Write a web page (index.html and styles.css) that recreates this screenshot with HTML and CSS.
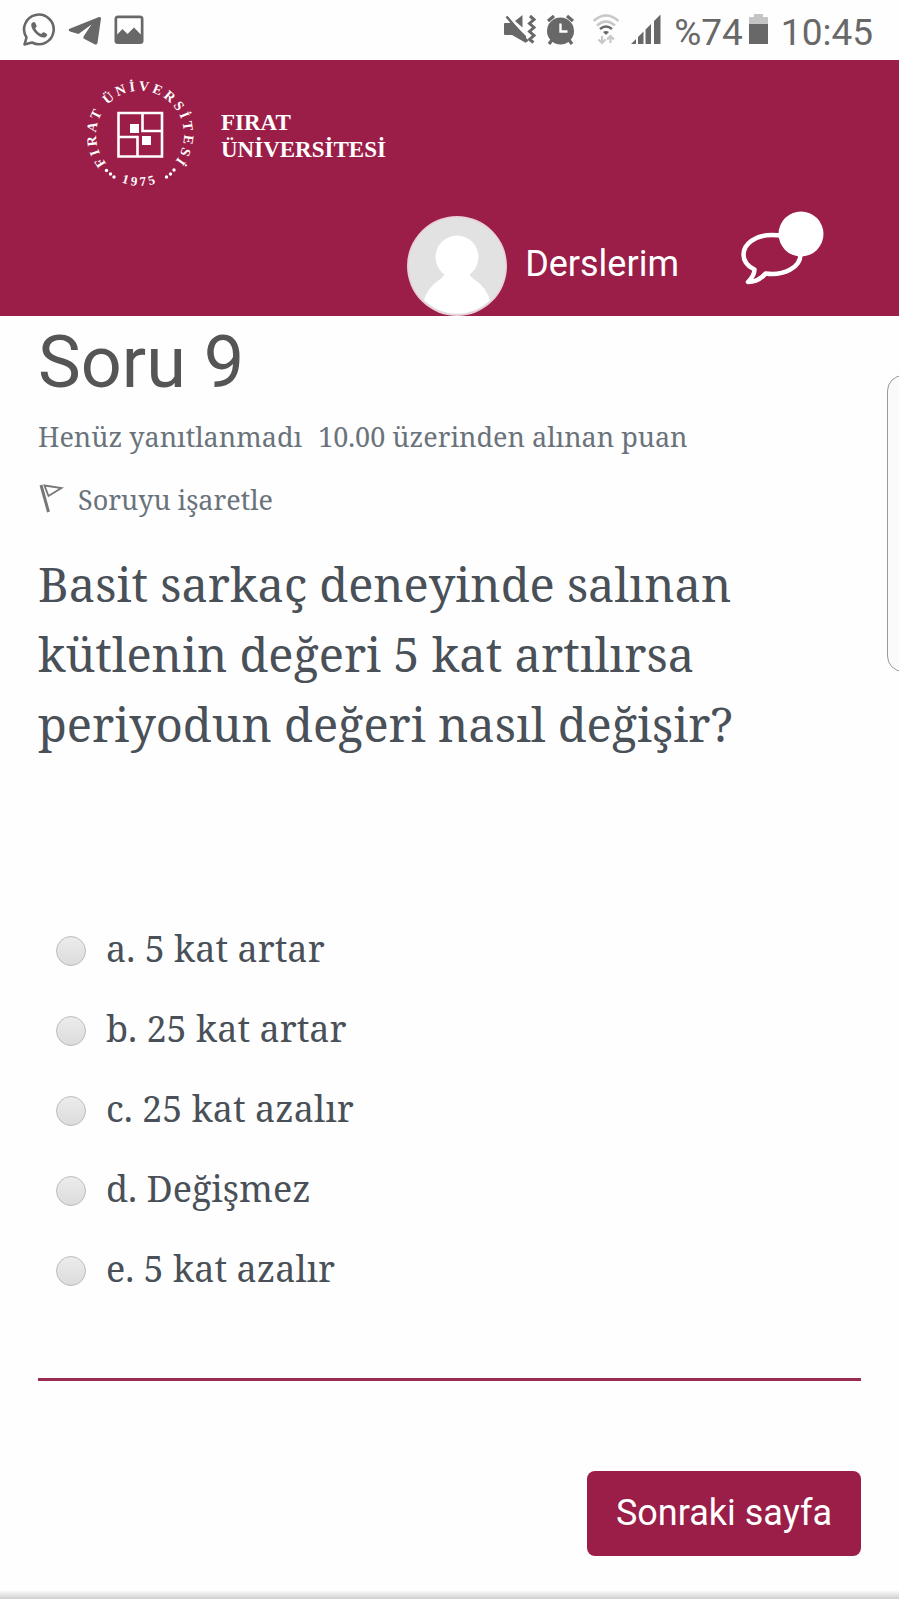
FILE: index.html
```html
<!DOCTYPE html>
<html lang="tr">
<head>
<meta charset="utf-8">
<meta name="viewport" content="width=device-width, initial-scale=1">
<title>Fırat Üniversitesi – Soru 9</title>
<link rel="stylesheet" href="styles.css">
</head>
<body>
<div class="status">
  <div class="status-left">
    <svg width="34" height="34" viewBox="0 0 34 34" fill="none" aria-hidden="true">
      <path d="M2.500 31.500 L4.500 24.500 A14.800 14.800 0 1 1 10 29.500 Z" stroke="#686868" stroke-width="2.600" stroke-linejoin="round"/>
      <path d="M10.500 9.500 C12 8.500 13 9 13.600 10.500 L14.600 12.800 C15 14 13.500 14.500 13.200 15.300 C14.500 18 16.500 19.800 19.200 21 C20 20.500 20.800 18.800 22 19.300 L24.600 20.700 C26 21.500 24.800 23.200 23.800 23.900 C19.500 26.500 12.500 20.500 10.300 15.800 C9 13 8.600 11 10.500 9.500 Z" fill="#686868"/>
    </svg>
    <svg width="34" height="34" viewBox="0 0 34 34" aria-hidden="true">
      <path d="M1 16 Q0 17.500 2 18.500 L10.500 21 L23.500 11.500 L15.500 23.500 V25.500 L27 31.500 Q29 32 29.500 30 L33 5.500 Q33 3.500 31 4 Z" fill="#686868"/>
    </svg>
    <svg width="30" height="30" viewBox="0 0 30 30" aria-hidden="true">
      <path d="M4 0.500 H26 Q29.500 0.500 29.500 4 V26 Q29.500 29 26 29 H4 Q0.500 29 0.500 26 V4 Q0.500 0.500 4 0.500 Z M3.200 3.200 V19.500 L8.500 14 L13.500 19 L20 12.500 L26.800 19.500 V3.200 Z" fill="#686868" fill-rule="evenodd"/>
    </svg>
  </div>
  <div class="status-right">
    <svg width="126" height="34" viewBox="0 0 126 34" fill="none" aria-hidden="true">
      <path d="M0 11 Q0 10 1 10 H9 L22 23 V30 L8 22 H1 Q0 22 0 21 Z M11 8 L18.500 2 V14.500 Z" fill="#686868"/>
      <path d="M2.500 3.500 L23.500 28.500" stroke="#686868" stroke-width="2.500"/>
      <path d="M26 3 L30 6.500 L25.500 10.500 L30 14.500 L25.500 18.500 L30 22.500 L25.500 26.500 L29.500 29.500" stroke="#686868" stroke-width="3"/>
      <circle cx="56.500" cy="18" r="13.500" fill="#686868"/>
      <path d="M44 8 L50 3 M63 3 L69 8 M48 27 L45 31 M65 27 L68 31" stroke="#686868" stroke-width="3.200"/>
      <path d="M56.500 10.500 V18.500 H63.500" stroke="#fff" stroke-width="2.400"/>
      <path d="M89.500 8 Q102 -3 114.500 8 M93 12.500 Q102 4.500 111 12.500" stroke="#c8c8c8" stroke-width="2.400"/>
      <path d="M96 16 Q102 11 108 16" stroke="#686868" stroke-width="2.500"/>
      <path d="M99 19 Q102 17 105 19 L102 22 Z" fill="#686868"/>
      <path d="M98 23 V30 M94.500 26.500 L98 30 L101.500 26.500 M106.500 30 V23 M103 26.500 L106.500 23 L110 26.500" stroke="#c8c8c8" stroke-width="2.200"/>
    </svg>
    <svg class="signal" width="32" height="34" viewBox="0 0 32 34" fill="#686868" aria-hidden="true">
      <path d="M1 31 L6 26 V31 Z M8 24 L13.500 18.500 V31 H8 Z M15.500 16.500 L21 11 V31 H15.500 Z M24 8 L30.500 1.500 V31 H24 Z"/>
    </svg>
    <span>%74</span>
    <svg class="battery" width="20" height="34" viewBox="0 0 20 34" aria-hidden="true">
      <path d="M0 12 V4 H5 V1 H14 V4 H19 V12 Z" fill="#c4c4c4"/><path d="M0 11 H19 V31 H0 Z" fill="#686868"/>
    </svg>
    <span>10:45</span>
  </div>
</div>

<header class="banner">
  <a class="brand" href="#">
    <svg class="seal" width="112" height="112" viewBox="-56 -56 112 112" aria-hidden="true">
      <defs>
        <path id="ring" d="M-31 31 A44 44 0 1 1 31 31"/>
        <path id="year" d="M-36 36 A51 51 0 0 0 36 36"/>
      </defs>
      <text class="seal-ring"><textPath href="#ring" startOffset="50%" text-anchor="middle">FIRAT ÜNİVERSİTESİ</textPath></text>
      <text class="seal-year"><textPath href="#year" startOffset="50%" text-anchor="middle">1975</textPath></text>
      <path d="M-21.500 -22 H22 V21.500 H-21.500 Z M2.500 -22 V-4 H22 M-21.500 2 H-2.500 V21.500" fill="none" stroke="#fff" stroke-width="2.600"/>
      <path d="M-10 -11 H-1 V-2 H-10 Z M2 1 H11 V10 H2 Z" fill="#fff"/>
      <g fill="#fff"><circle cx="-33.500" cy="35.500" r="1.700"/><circle cx="-29.500" cy="39" r="1.700"/><circle cx="-26" cy="42" r="1.700"/><circle cx="34" cy="35" r="1.700"/><circle cx="30.500" cy="39" r="1.700"/><circle cx="26.500" cy="42" r="1.700"/></g>
    </svg>
    <span class="brand-name">FIRAT<br>ÜNİVERSİTESİ</span>
  </a>
  <nav class="nav">
    <a class="avatar" href="#" aria-label="Profil">
      <svg width="100" height="100" viewBox="0 0 100 100" aria-hidden="true">
        <defs><clipPath id="disc"><circle cx="50" cy="50" r="47.500"/></clipPath></defs>
        <circle cx="50" cy="50" r="50" fill="#e9cfd8"/><circle cx="50" cy="50" r="48.500" fill="#e2e2e2"/>
        <g clip-path="url(#disc)" fill="#fff"><circle cx="50" cy="41" r="21.500"/><path d="M38 56 H62 Q62 60 68 64 Q79 71 84 86 V100 H16 V86 Q21 71 32 64 Q38 60 38 56 Z"/></g>
      </svg>
    </a>
    <a class="nav-link" href="#">Derslerim</a>
    <a class="messages" href="#" aria-label="Mesajlar">
      <svg width="84" height="76" viewBox="0 0 84 76" aria-hidden="true">
        <path d="M31 24 C14 24 2.500 33 2.500 43.500 C2.500 50 7 55.500 13.500 58.500 C13.500 64 10.500 67.500 7 71 C15 71 20.500 67.500 24.500 62.500 C43 65 59.500 56.500 59.500 43.500 C59.500 32 47 24 31 24 Z" fill="none" stroke="#fff" stroke-width="4.500" stroke-linejoin="round"/>
        <circle cx="60" cy="23" r="22.500" fill="#fff"/>
      </svg>
    </a>
  </nav>
</header>

<main class="content">
  <section>
    <h1>Soru 9</h1>
    <p class="meta"><span>Henüz yanıtlanmadı</span><span>10.00 üzerinden alınan puan</span></p>
    <a class="flag" href="#">
      <svg width="26" height="32" viewBox="0 0 26 32" fill="none" stroke="#777" aria-hidden="true">
        <path d="M3 1 L10.500 28" stroke-width="3"/><path d="M6.500 1.500 L23.500 4 L10.500 12 Z" stroke-width="1.800"/>
      </svg>
      <span>Soruyu işaretle</span>
    </a>
  </section>
  <form class="quiz">
    <p class="question" id="question">Basit sarkaç deneyinde salınan kütlenin değeri 5 kat artılırsa periyodun değeri nasıl değişir?</p>
    <div class="options" role="radiogroup" aria-labelledby="question">
      <label><input type="radio" name="answer" value="a"><span>a. 5 kat artar</span></label>
      <label><input type="radio" name="answer" value="b"><span>b. 25 kat artar</span></label>
      <label><input type="radio" name="answer" value="c"><span>c. 25 kat azalır</span></label>
      <label><input type="radio" name="answer" value="d"><span>d. Değişmez</span></label>
      <label><input type="radio" name="answer" value="e"><span>e. 5 kat azalır</span></label>
    </div>
    <div class="actions"><button type="button">Sonraki sayfa</button></div>
  </form>
  <aside class="drawer" aria-label="Yan panel"></aside>
</main>
<footer class="edge"></footer>
</body>
</html>
```
FILE: styles.css
```css
* { box-sizing: border-box; }
body {
  margin: 0;
  min-height: 100vh;
  display: flex;
  flex-direction: column;
  overflow-x: hidden;
  background: #fefefe;
  color: #495057;
  font-family: "Noto Serif", "Droid Serif", "DejaVu Serif", serif;
}
h1, p { margin: 0; }
a { color: inherit; text-decoration: none; }
svg { display: block; flex: none; }

.status {
  height: 60px;
  padding: 0 26px 0 22px;
  display: flex;
  justify-content: space-between;
  align-items: center;
  color: #686868;
  font: 37px/42px Roboto, sans-serif;
}
.status-left, .status-right { display: flex; align-items: center; }
.status-left { gap: 12px; }
.status-right { padding-top: 6px; }
.status-right svg { margin-bottom: 6px; }
.status-right .signal { margin-right: 12px; }
.status-right .battery { margin: 0 12px 6px 6px; }

.banner {
  padding: 19px 74px 0 84px;
  background: #9a1e47;
  color: #fff;
}
.brand {
  display: inline-flex;
  align-items: center;
  gap: 25px;
  font: bold 23px/27px "Liberation Serif", serif;
  vertical-align: top;
}
.brand-name { padding-top: 2px; }
.seal { overflow: visible; }
.seal-ring, .seal-year {
  fill: #fff;
  font: bold 14px "Liberation Serif", serif;
  letter-spacing: 3px;
}
.seal-year { font-size: 13px; }
.nav {
  display: flex;
  justify-content: flex-end;
  align-items: flex-end;
  margin-top: 20px;
}
.nav-link {
  margin: 0 62px 30px 18px;
  font: 36px/44px Roboto, sans-serif;
}
.messages { margin-bottom: 29px; }

.content { position: relative; flex: 1; padding: 11px 38px 0; }
h1 {
  color: #555;
  font: 400 72px/72px Roboto, sans-serif;
}
.meta {
  display: flex;
  flex-wrap: wrap;
  column-gap: 16px;
  margin-top: 18px;
  color: #6a737b;
  font-size: 27px;
  line-height: 40px;
}
.flag {
  display: inline-flex;
  align-items: center;
  gap: 14px;
  margin-top: 23px;
  color: #6a737b;
  font-size: 27px;
  line-height: 40px;
  vertical-align: top;
}
.question {
  max-width: 780px;
  margin-top: 29px;
  font-size: 47px;
  line-height: 70px;
}
.options {
  margin-top: 149px;
  padding: 0 18px;
  display: grid;
  justify-items: start;
}
.options label {
  display: flex;
  align-items: center;
  gap: 20px;
  height: 80px;
  font-size: 36px;
}
.options input {
  appearance: none;
  width: 30px;
  height: 30px;
  margin: 6px 0 0;
  border: 1px solid #bbb;
  border-radius: 50%;
  background: linear-gradient(#ececec, #dcdcdc);
}
.options input:checked { border: 9px solid #9a1e47; }
.actions {
  display: flex;
  justify-content: flex-end;
  margin-top: 70px;
  padding-top: 90px;
  border-top: 3px solid #9a2c50;
}
button {
  padding: 20px 29px;
  border: 0;
  border-radius: 8px;
  background: #9a1e47;
  color: #fff;
  font: 36px/45px Roboto, sans-serif;
}
.drawer {
  position: absolute;
  top: 59px;
  right: -12px;
  width: 24px;
  height: 297px;
  border: 1px solid #999;
  border-radius: 16px 0 0 16px;
  background: #fafafa;
}
.edge { height: 9px; background: linear-gradient(#fefefe, #cfcfcf); }
```
